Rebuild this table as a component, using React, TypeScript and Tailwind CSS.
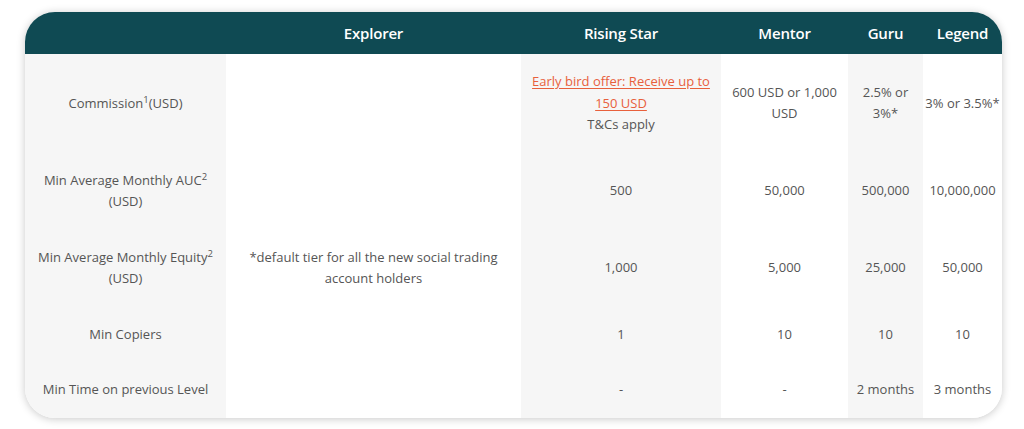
const cols = ["w-[201px]", "w-[295px]", "w-[200px]", "w-[127px]", "w-[75px]", "w-[79px]"];
const shade = ["bg-[#f6f6f6]", "bg-white", "bg-[#f6f6f6]", "bg-white", "bg-[#f6f6f6]", "bg-white"];

function Sup({ children }: { children: React.ReactNode }) {
  return <span className="relative -top-[5px] text-[9.5px] leading-none">{children}</span>;
}

const rows: React.ReactNode[][] = [
  [
    <>
      Commission<Sup>1</Sup>(USD)
    </>,
    "",
    <>
      <a href="#" className="text-[#e8603c] underline underline-offset-2">
        Early bird offer: Receive up to 150 USD
      </a>
      <br />
      T&amp;Cs apply
    </>,
    "600 USD or 1,000 USD",
    "2.5% or 3%*",
    "3% or 3.5%*",
  ],
  [
    <>
      Min Average Monthly AUC<Sup>2</Sup> (USD)
    </>,
    "",
    "500",
    "50,000",
    "500,000",
    "10,000,000",
  ],
  [
    <>
      Min Average Monthly Equity<Sup>2</Sup> (USD)
    </>,
    <span className="block px-4">*default tier for all the new social trading account holders</span>,
    "1,000",
    "5,000",
    "25,000",
    "50,000",
  ],
  ["Min Copiers", "", "1", "10", "10", "10"],
  ["Min Time on previous Level", "", "-", "-", "2 months", "3 months"],
];

export default function App() {
  return (
    <div className="w-[1024px] h-[429px] bg-white pt-[12px] pl-[25px]" style={{ fontFamily: "'Open Sans', 'Noto Sans', sans-serif" }}>
      <div className="w-[977px] rounded-[30px] overflow-hidden shadow-[0_1px_8px_rgba(0,0,0,0.22)]">
        <table className="table-fixed w-full border-collapse">
          <colgroup>
            {cols.map((c, i) => (
              <col key={i} className={c} />
            ))}
          </colgroup>
          <thead>
            <tr className="bg-[#0f4a53] h-[42px]">
              <th />
              {["Explorer", "Rising Star", "Mentor", "Guru", "Legend"].map((h) => (
                <th key={h} className="text-white font-semibold text-[15px] tracking-[-0.2px] text-center px-1">
                  {h}
                </th>
              ))}
            </tr>
          </thead>
          <tbody>
            {rows.map((r, ri) => (
              <tr key={ri}>
                {r.map((cell, ci) => (
                  <td
                    key={ci}
                    className={`${shade[ci]} text-center align-middle text-[13px] leading-[21.5px] text-[#555] py-[17px] ${ci === 0 ? "px-[8px]" : "px-[2px]"}`}
                  >
                    {cell}
                  </td>
                ))}
              </tr>
            ))}
          </tbody>
        </table>
      </div>
    </div>
  );
}
